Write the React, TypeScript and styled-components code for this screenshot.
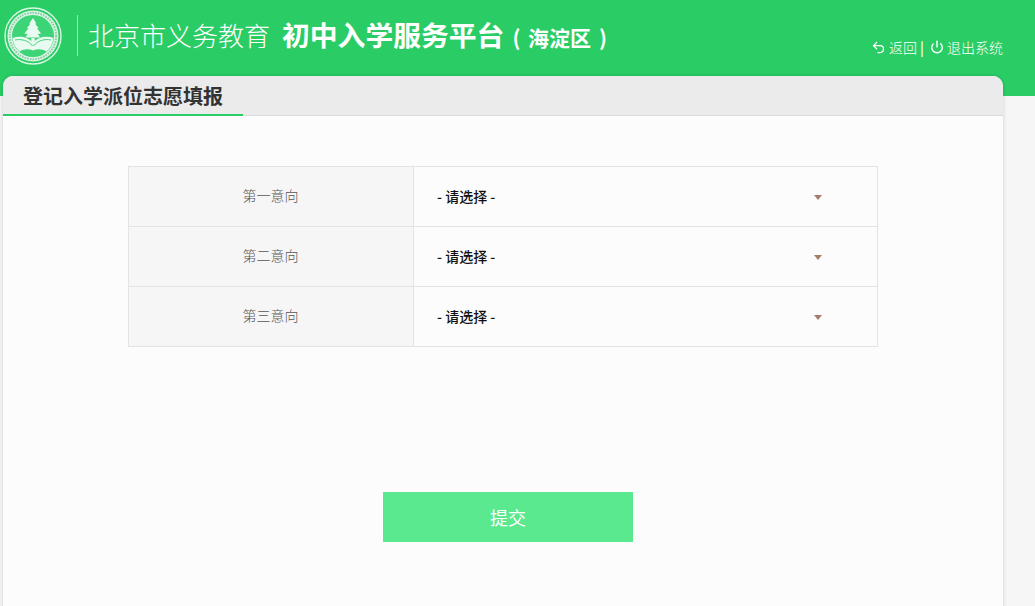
import React from "react";
import styled, { createGlobalStyle } from "styled-components";
import { Power, Undo2 } from "lucide-react";

const GlobalStyle = createGlobalStyle`
  html, body {
    margin: 0;
    padding: 0;
    height: 100%;
    overflow: hidden;
    background: #f6f6f6;
    font-family: "Noto Sans CJK SC", "Liberation Sans", sans-serif;
  }
`;

const StyledHeader = styled.header`
  display: flex;
  height: 96px;
  padding: 7px 32px 0 4px;
  box-sizing: border-box;
  background: #2acd65;
  color: #fff;
`;

const StyledLogo = styled.svg`
  width: 58px;
  height: 58px;
  flex: none;
`;

const StyledDivider = styled.div`
  width: 1px;
  height: 41px;
  margin: 8px 11px 0 15px;
  background: rgba(255, 255, 255, 0.55);
`;

const StyledBrand = styled.div`
  display: flex;
  align-items: baseline;
  height: 60px;
  line-height: 55px;
  white-space: nowrap;
`;

const StyledCity = styled.span`
  font-size: 26px;
  font-weight: 300;
  margin-left: -1px;
`;

const StyledPlatform = styled.span`
  margin-left: 12px;
  font-size: 27.8px;
  font-weight: 700;
`;

const StyledDistrict = styled.span`
  margin-left: 8px;
  font-size: 21px;
  font-weight: 700;
  word-spacing: 3px;
`;

const StyledLinks = styled.nav`
  display: flex;
  align-items: center;
  height: 20px;
  margin: 30px 0 0 auto;
  font-size: 14px;
  font-weight: 300;
  white-space: nowrap;
`;

const StyledLinkText = styled.span`
  margin-left: 3px;
`;

const StyledSeparator = styled.span`
  margin: 0 6px 0 3px;
  font-weight: 500;
`;

const StyledPanel = styled.main`
  position: relative;
  width: 1000px;
  height: 560px;
  margin: -20px 0 0 3px;
  border-radius: 10px 10px 0 0;
  background: #fcfcfc;
  box-shadow: 0 0 4px rgba(0, 0, 0, 0.16);
  overflow: hidden;
`;

const StyledTitleBar = styled.div`
  height: 40px;
  box-sizing: border-box;
  background: #ebebeb;
  border-bottom: 1px solid #dcdcdc;
`;

const StyledTitle = styled.h1`
  width: 240px;
  height: 40px;
  margin: 0;
  padding-left: 20px;
  box-sizing: border-box;
  border-bottom: 2px solid #2acd65;
  color: #333;
  font-size: 20px;
  font-weight: 700;
  line-height: 40px;
`;

const StyledTable = styled.div`
  width: 750px;
  margin: 50px 0 0 125px;
  box-sizing: border-box;
  border: 1px solid #e3e3e3;
  border-bottom: 0;
`;

const StyledRow = styled.div`
  display: grid;
  grid-template-columns: 285px 1fr;
  height: 60px;
  box-sizing: border-box;
  border-bottom: 1px solid #e3e3e3;
`;

const StyledLabel = styled.label`
  display: flex;
  align-items: center;
  justify-content: center;
  padding: 0 1px 4px 0;
  background: #f6f6f6;
  border-right: 1px solid #e3e3e3;
  color: #555;
  font-size: 14px;
  font-weight: 300;
`;

const StyledCell = styled.div`
  position: relative;
  display: flex;
  align-items: center;
  padding: 0 0 2px 23px;
`;

const StyledSelect = styled.select`
  width: 400px;
  height: 30px;
  padding: 0;
  border: 0;
  outline: 0;
  background: transparent;
  appearance: none;
  color: #111;
  font-family: inherit;
  font-size: 14px;
  font-weight: 500;
`;

const StyledCaret = styled.span`
  position: absolute;
  top: 28px;
  left: 400px;
  border-top: 5px solid #a57d6c;
  border-left: 4px solid transparent;
  border-right: 4px solid transparent;
  pointer-events: none;
`;

const StyledActions = styled.div`
  display: flex;
  justify-content: center;
  margin-top: 145px;
  padding-left: 10px;
`;

const StyledSubmit = styled.button`
  width: 250px;
  height: 50px;
  border: 0;
  background: #5ae98f;
  color: #fff;
  font-family: inherit;
  font-size: 18px;
  font-weight: 400;
`;

const Logo = () => (
  <StyledLogo viewBox="0 0 58 58" aria-hidden="true">
    <circle cx="29" cy="29" r="28" fill="none" stroke="#d8f6e3" strokeWidth="1.4" />
    <circle cx="29" cy="29" r="25.5" fill="#d8f6e3" />
    <circle cx="29" cy="29" r="21" fill="#3dd477" />
    <circle cx="29" cy="29" r="23.2" fill="none" stroke="#8fcba6" strokeWidth="2" strokeDasharray="1.6 1.1" />
    <path
      d="M29 11l3.400 5.500h-1.500l3.800 4.800h-1.800l4.300 5.500h-3.400l2.200 3.700H21.500l2.200-3.700h-3.400l4.300-5.500h-1.800l3.800-4.800h-1.500z"
      fill="#e9fbf0"
    />
    <rect x="27.300" y="31" width="3.400" height="6" fill="#e9fbf0" />
    <path
      d="M8.500 31c7-2.200 15-1.500 20.500 5 5.500-6.500 13.500-7.200 20.500-5-.8 6-3.500 10.500-7 13.500-4-2.500-9-3-13.500-1-4.500-2-9.500-1.500-13.500 1-3.500-3-6.200-7.500-7-13.500z"
      fill="#e9fbf0"
    />
    <path
      d="M11 33c6-1.300 13 .2 17.500 6M47 33c-6-1.300-13 .2-17.500 6"
      fill="none"
      stroke="#3dd477"
      strokeWidth="1"
    />
  </StyledLogo>
);

const choices = ["第一意向", "第二意向", "第三意向"];

const App = () => {
  return (
    <>
      <GlobalStyle />
      <StyledHeader>
        <Logo />
        <StyledDivider />
        <StyledBrand>
          <StyledCity>北京市义务教育</StyledCity>
          <StyledPlatform>初中入学服务平台</StyledPlatform>
          <StyledDistrict>( 海淀区 )</StyledDistrict>
        </StyledBrand>
        <StyledLinks>
          <Undo2 size={15} strokeWidth={2} />
          <StyledLinkText>返回</StyledLinkText>
          <StyledSeparator>|</StyledSeparator>
          <Power size={14} strokeWidth={2.4} />
          <StyledLinkText>退出系统</StyledLinkText>
        </StyledLinks>
      </StyledHeader>
      <StyledPanel>
        <StyledTitleBar>
          <StyledTitle>登记入学派位志愿填报</StyledTitle>
        </StyledTitleBar>
        <StyledTable>
          {choices.map((choice) => (
            <StyledRow key={choice}>
              <StyledLabel>{choice}</StyledLabel>
              <StyledCell>
                <StyledSelect aria-label={choice} defaultValue="">
                  <option value="">- 请选择 -</option>
                </StyledSelect>
                <StyledCaret />
              </StyledCell>
            </StyledRow>
          ))}
        </StyledTable>
        <StyledActions>
          <StyledSubmit type="button">提交</StyledSubmit>
        </StyledActions>
      </StyledPanel>
    </>
  );
};

export default App;
